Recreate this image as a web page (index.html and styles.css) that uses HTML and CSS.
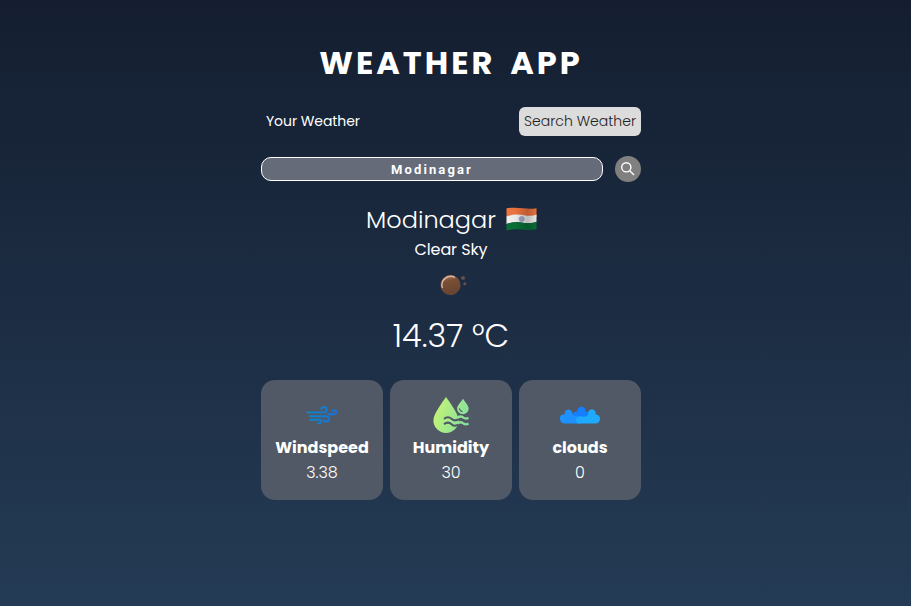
FILE: index.html
```html
<!DOCTYPE html>
<html lang="en">
<head>
<meta charset="utf-8">
<title>Weather App</title>
<link rel="stylesheet" href="styles.css">
</head>
<body>
<main class="wrapper">
  <h1 class="title">WEATHER APP</h1>
  <nav class="tabs">
    <span class="tab">Your Weather</span>
    <span class="tab current">Search Weather</span>
  </nav>
  <form class="search">
    <div class="field">Modinagar</div>
    <button class="search-btn" type="button" aria-label="Search">
      <svg width="14" height="14" viewBox="0 0 14 14" fill="none" stroke="#fff" stroke-width="1.4"><circle cx="5.3" cy="5.3" r="4.6"/><path d="M8.700 8.700L13 13"/></svg>
    </button>
  </form>
  <section class="weather">
    <div class="place">
      <span class="city">Modinagar</span>
      <svg class="flag" width="31" height="24" viewBox="0 0 31 24">
        <defs>
          <linearGradient id="shade"><stop offset="0" stop-color="#000" stop-opacity="0"/><stop offset=".3" stop-color="#000" stop-opacity=".03"/><stop offset=".7" stop-color="#000" stop-opacity=".22"/><stop offset="1" stop-color="#000" stop-opacity=".03"/></linearGradient>
          <clipPath id="cloth"><path d="M.5 1.200C8 .3 12 .6 17 1.300S26 1.900 30.500 1.200V22.300C25 23.400 20 23 15 22.400S6 22.200.5 23.500Z"/></clipPath>
        </defs>
        <g clip-path="url(#cloth)">
          <path fill="#f07541" d="M0 0H31V10H0Z"/>
          <path fill="#f1f1ef" d="M0 9.500C8 7 13 7.300 18 8.300S27 8.900 31 7.500V14.800C24 16.800 20 16.500 15 15.600S5 15.300 0 17.300Z"/>
          <path fill="#0a7036" d="M0 17.300C5 15.300 10 14.700 15 15.600S24 16.800 31 14.800V24H0Z"/>
          <circle cx="15.700" cy="12" r="2.600" fill="#a2a9cb" stroke="#a2a9c4" stroke-width=".9"/>
          <path fill="url(#shade)" d="M0 0H31V24H0Z"/>
        </g>
      </svg>
    </div>
    <p class="desc">Clear Sky</p>
    <svg class="moon" width="28" height="22" viewBox="0 0 28 22">
      <defs><linearGradient id="copper" x1="0" y1="0" x2=".2" y2="1"><stop offset="0" stop-color="#b58568"/><stop offset=".35" stop-color="#7a4f35"/><stop offset="1" stop-color="#684530"/></linearGradient></defs>
      <circle cx="10.500" cy="11" r="9.700" fill="url(#copper)" stroke="#704d3c" stroke-width=".8"/>
      <path d="M2.500 14A8.700 8.700 0 0 1 15 3.500" fill="none" stroke="#dbb9a2" stroke-width="1.400"/>
      <path fill="#6c5450" d="M23 1.200l.8 1.700 1.800.2-1.300 1.300.4 1.800-1.700-.9-1.700.9.4-1.800-1.300-1.300 1.800-.2ZM24.800 7.600l.6 1.300 1.500.2-1.100 1 .3 1.500-1.300-.7-1.300.7.3-1.500-1.100-1 1.500-.2Z"/>
    </svg>
    <p class="temp">14.37 °C</p>
    <div class="cards">
      <article class="card">
        <div class="icon">
          <svg width="40" height="40" viewBox="0 0 40 40" fill="none" stroke-width="1.900">
            <defs><linearGradient id="breeze" gradientUnits="userSpaceOnUse" x1="5" y1="0" x2="35" y2="0"><stop offset="0" stop-color="#078bcf"/><stop offset="1" stop-color="#1b70db"/></linearGradient></defs>
            <g stroke="url(#breeze)">
              <path d="M4.700 17.400H22A2.700 2.700 0 1 0 19.300 14.700"/>
              <path d="M7.300 21.200H24.200A2.700 2.700 0 1 1 21.500 24.500"/>
              <path d="M7.700 24.700H17.400A1.800 1.800 0 1 1 15.900 27.300"/>
              <path d="M25.500 19.200H32.300A2 2 0 1 0 30.300 17"/>
            </g>
          </svg>
        </div>
        <h2 class="name">Windspeed</h2>
        <p class="value">3.38</p>
      </article>
      <article class="card">
        <div class="icon">
          <svg width="40" height="40" viewBox="0 0 40 40">
            <defs>
              <linearGradient id="dew" gradientUnits="userSpaceOnUse" x1="4" y1="14" x2="38" y2="26"><stop offset="0" stop-color="#c3f477"/><stop offset="1" stop-color="#83dfa0"/></linearGradient>
              <mask id="ripples"><path fill="#fff" d="M0 0H40V40H0Z"/><circle cx="31.700" cy="13.800" r="7" fill="#000"/><path d="M13 23.800q4-3.100 7.500 0t7.500 0M13 29.200q4-3.100 7.500 0t7.500 0" fill="none" stroke="#000" stroke-width="2.100"/></mask>
            </defs>
            <path mask="url(#ripples)" fill="url(#dew)" d="M15 2C18.500 7 27.700 19 27.700 25.500A12.500 12.300 0 0 1 2.400 25.500C2.400 19 11.500 7 15 2Z"/>
            <path fill="url(#dew)" d="M32 3.800C34 7 37.700 10.500 37.700 13.600A5.800 5.600 0 0 1 26.100 13.600C26.100 10.500 30 7 32 3.800Z"/>
            <path d="M28.200 13.400Q29 16.200 31.500 16.800" fill="none" stroke="#4d5763" stroke-width="1.100"/>
            <path d="M26.500 22.700q3.500-2.400 6 0 2.400 1.800 5 0M26.500 28.500q3.500-2.400 6 0 2.400 1.800 5 0" fill="none" stroke="url(#dew)" stroke-width="2.300"/>
          </svg>
        </div>
        <h2 class="name">Humidity</h2>
        <p class="value">30</p>
      </article>
      <article class="card">
        <div class="icon">
          <svg width="40" height="40" viewBox="0 0 40 40">
            <path fill="#157fff" d="M12 28V19.500Q14 16 17.600 16.500A4 4 0 1 1 25.300 16.500Q28 16.500 30 20V28Z"/>
            <path fill="#1c91ff" d="M4.500 28.500A4.500 4.500 0 0 1 0 24V22.500Q0 19.300 4.700 19.500A3.900 3.900 0 1 1 12.200 19.500Q14 21.500 17 21 21 20.500 21 24V28.500Z"/>
            <path fill="#1eaaff" d="M17.500 28.500Q14.500 25 17.500 22.500 19.500 20.500 22.500 21.500 26.500 22.500 28.200 19.500A3.900 3.900 0 1 1 35.500 19.500Q40 19.500 40 24A4.500 4.500 0 0 1 35.500 28.500Z"/>
          </svg>
        </div>
        <h2 class="name">clouds</h2>
        <p class="value">0</p>
      </article>
    </div>
  </section>
</main>
</body>
</html>
```
FILE: styles.css
```css
* { box-sizing: border-box; margin: 0; padding: 0; }
body {
  min-height: 100vh;
  padding-right: 9px;
  color: #fff;
  font-family: Poppins, Inter, "Open Sans", sans-serif;
  background: linear-gradient(#141e30, #243b55);
}
.wrapper { width: 380px; margin: 0 auto; padding-top: 38px; }
.title { height: 48px; font-size: 32px; line-height: 49px; font-weight: 700; letter-spacing: 3px; word-spacing: 5px; text-align: center; white-space: nowrap; }
.tabs { display: flex; justify-content: space-between; margin-top: 21px; height: 29px; }
.tab { padding: 0 5px; font-size: 14px; line-height: 28px; letter-spacing: -.07px; white-space: nowrap; border-radius: 6px; }
.current { width: 122px; color: #222; background: #dcdcdc; font-weight: 300; letter-spacing: .03px; }
.search { display: flex; justify-content: space-between; align-items: center; margin-top: 20px; height: 26px; }
.field { width: 342px; height: 24px; border: 1px solid #fff; border-radius: 10px; background: #656b78; font: 700 13px/23px Roboto, "Liberation Sans", sans-serif; letter-spacing: 2.100px; text-align: center; }
.search-btn { display: grid; place-items: center; width: 26px; height: 26px; border: 0; border-radius: 50%; background: #808080; }
.weather { display: flex; flex-direction: column; align-items: center; }
.place { display: flex; align-items: center; gap: 10px; height: 36px; margin: 20px 0 0 1px; }
.city { font-size: 24px; line-height: 36px; font-weight: 300; }
.flag { margin-top: -2px; }
.desc { font-size: 16px; line-height: 24px; height: 24px; letter-spacing: -.1px; }
.moon { margin: 12px 0 0 5px; }
.temp { height: 48px; margin-top: 16px; font-size: 32px; line-height: 48px; font-weight: 300; }
.cards { display: grid; grid-template-columns: repeat(3, 122px); gap: 7px; margin-top: 20px; }
.card { height: 120px; padding-top: 15px; text-align: center; border-radius: 14px; background: #505965; }
.icon { height: 40px; }
.name { height: 24px; font-size: 16px; line-height: 25px; font-weight: 700; white-space: nowrap; }
.value { font-size: 16px; line-height: 27px; font-weight: 300; }
```
